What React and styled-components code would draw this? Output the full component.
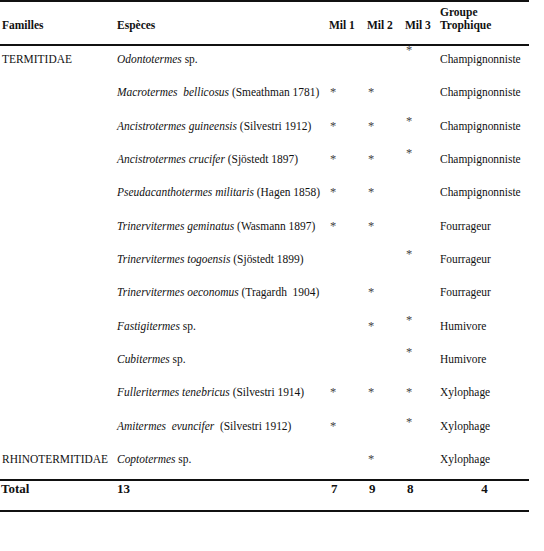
import React from "react";
import styled, { createGlobalStyle, css } from "styled-components";

const SERIF = `"Liberation Serif", "Times New Roman", serif`;

const Global = createGlobalStyle`
  html, body { margin: 0; padding: 0; background: #fff; }
  body { font-family: ${SERIF}; color: #111; }
`;

const serif = css`
  font-family: ${SERIF};
`;

const COLS = "117px 212px 38px 38px 35px 89px";

const Table = styled.div`
  ${serif};
  width: 529px;
  border-top: 2px solid #111;
  border-bottom: 2px solid #111;
`;

const HeadRow = styled.div`
  ${serif};
  display: grid;
  grid-template-columns: ${COLS};
  height: 44px;
  box-sizing: border-box;
  padding: 4px 0 14px;
  align-items: end;
  border-bottom: 2px solid #111;
  font-weight: bold;
  font-size: 11.5px;
  line-height: 13px;
`;

const HeadCell = styled.div`
  padding-left: ${(p) => (p.$first ? "2px" : "0")};
  white-space: nowrap;
`;

const Body = styled.div`
  display: flex;
  flex-direction: column;
`;

const Row = styled.div`
  ${serif};
  display: grid;
  grid-template-columns: ${COLS};
  height: 33.33px;
  box-sizing: border-box;
  padding-top: 6px;
  align-items: start;
  font-size: 11.45px;
  line-height: 14px;
`;

const Cell = styled.div`
  padding-left: ${(p) => (p.$first ? "2px" : "0")};
  white-space: pre;
`;

const MarkCell = styled.div`
  padding-left: 1px;
`;

const Mark = styled.span`
  color: #444;
  font-size: 12.5px;
  display: inline-block;
  transform: translateY(${(p) => (p.$raise ? `-${p.$raise}px` : "0")});
`;

const TotalRow = styled.div`
  ${serif};
  display: grid;
  grid-template-columns: ${COLS};
  height: 31px;
  box-sizing: border-box;
  border-top: 2px solid #111;
  font-weight: bold;
  font-size: 13px;
  line-height: 15px;
`;

const TotalCell = styled.div`
  padding-left: ${(p) => (p.$first ? "1px" : p.$num ? "2px" : "0")};
  text-align: ${(p) => (p.$center ? "center" : "left")};
`;

const rows = [
  { fam: "TERMITIDAE", genus: "Odontotermes", rest: " sp.", m: [0, 0, 9], g: "Champignonniste" },
  { genus: "Macrotermes  bellicosus", rest: " (Smeathman 1781)", m: [1, 1, 0], g: "Champignonniste" },
  { genus: "Ancistrotermes guineensis", rest: " (Silvestri 1912)", m: [1, 1, 5], g: "Champignonniste" },
  { genus: "Ancistrotermes crucifer", rest: " (Sjöstedt 1897)", m: [1, 1, 6], g: "Champignonniste" },
  { genus: "Pseudacanthotermes militaris", rest: " (Hagen 1858)", m: [1, 1, 0], g: "Champignonniste" },
  { genus: "Trinervitermes geminatus", rest: " (Wasmann 1897)", m: [1, 1, 0], g: "Fourrageur" },
  { genus: "Trinervitermes togoensis", rest: " (Sjöstedt 1899)", m: [0, 0, 5], g: "Fourrageur" },
  { genus: "Trinervitermes oeconomus", rest: " (Tragardh  1904)", m: [0, 1, 0], g: "Fourrageur" },
  { genus: "Fastigitermes", rest: " sp.", m: [0, 1, 6], g: "Humivore" },
  { genus: "Cubitermes", rest: " sp.", m: [0, 0, 7], g: "Humivore" },
  { genus: "Fulleritermes tenebricus", rest: " (Silvestri 1914)", m: [1, 1, 1], g: "Xylophage" },
  { genus: "Amitermes  evuncifer", rest: "  (Silvestri 1912)", m: [1, 0, 4], g: "Xylophage" },
  { fam: "RHINOTERMITIDAE", genus: "Coptotermes", rest: " sp.", m: [0, 1, 0], g: "Xylophage" },
];

function Marks({ m }) {
  return m.map((v, i) => (
    <MarkCell key={i}>
      {v ? <Mark $raise={i === 2 && v > 1 ? v : 0}>*</Mark> : null}
    </MarkCell>
  ));
}

export default function App() {
  return (
    <>
      <Global />
      <Table>
        <HeadRow>
          <HeadCell $first>Familles</HeadCell>
          <HeadCell>Espèces</HeadCell>
          <HeadCell>Mil 1</HeadCell>
          <HeadCell>Mil 2</HeadCell>
          <HeadCell>Mil 3</HeadCell>
          <HeadCell>
            Groupe
            <br />
            Trophique
          </HeadCell>
        </HeadRow>
        <Body>
          {rows.map((r, i) => (
            <Row key={i}>
              <Cell $first>{r.fam || ""}</Cell>
              <Cell>
                <i>{r.genus}</i>
                {r.rest}
              </Cell>
              <Marks m={r.m} />
              <Cell>{r.g}</Cell>
            </Row>
          ))}
        </Body>
        <TotalRow>
          <TotalCell $first>Total</TotalCell>
          <TotalCell>13</TotalCell>
          <TotalCell $num>7</TotalCell>
          <TotalCell $num>9</TotalCell>
          <TotalCell $num>8</TotalCell>
          <TotalCell $center>4</TotalCell>
        </TotalRow>
      </Table>
    </>
  );
}
